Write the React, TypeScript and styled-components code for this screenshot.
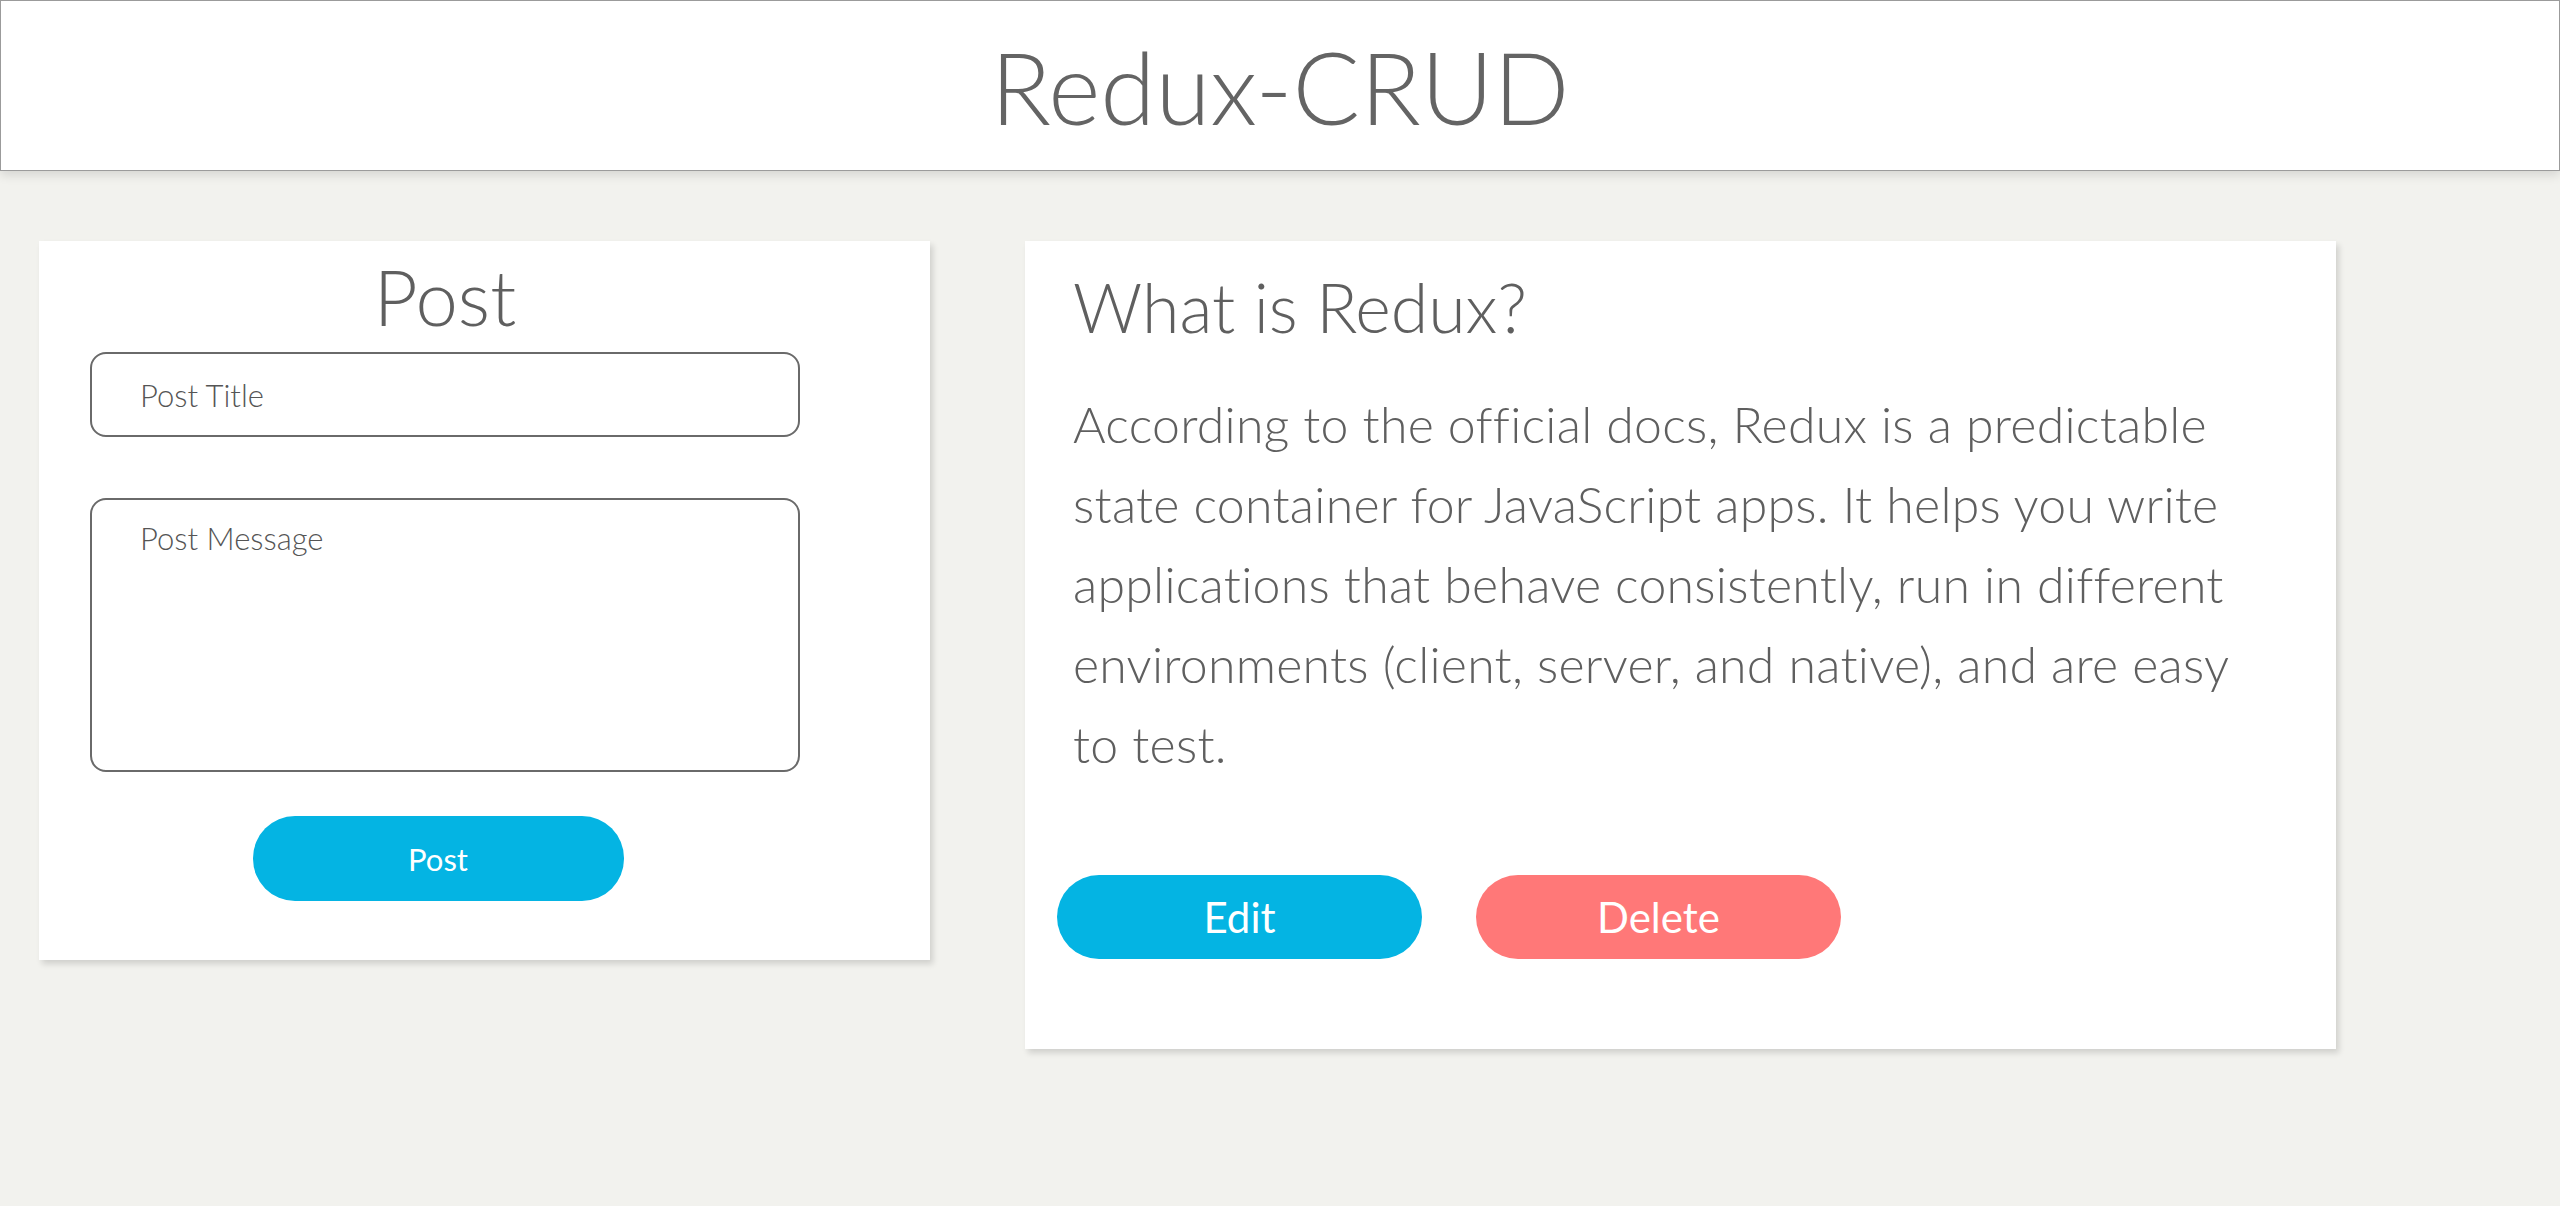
import React from "react";
import styled, { createGlobalStyle } from "styled-components";

const GlobalStyle = createGlobalStyle`
    body {
        margin: 0;
        background: #f2f2ee;
        font-family: "Lato", "Open Sans", sans-serif;
        font-weight: 300;
        color: #5f5f5f;
    }
`

const Header = styled.header`
    height: 169px;
    background: #ffffff;
    border: 1px solid #9b9b9b;
    box-shadow: 0 4px 10px rgba(0, 0, 0, 0.12);
    display: flex;
    align-items: center;
    justify-content: center;
`

const HeaderTitle = styled.h1`
    margin: 0;
    font-size: 100px;
    font-weight: 300;
    color: #646464;
`

const Main = styled.main`
    display: flex;
    align-items: flex-start;
    gap: 95px;
    padding: 70px 39px;
`

const Card = styled.section<{ $width: number; $height: number }>`
    width: ${p => p.$width}px;
    height: ${p => p.$height}px;
    box-sizing: border-box;
    background: #ffffff;
    box-shadow: 3px 4px 6px rgba(0, 0, 0, 0.14);
`

const PostForm = styled.form`
    width: 710px;
    padding: 10px 0 0 51px;
    display: flex;
    flex-direction: column;
    align-items: center;
`

const FormTitle = styled.h2`
    margin: 0 0 9px;
    font-size: 76px;
    font-weight: 300;
    line-height: 92px;
    color: #5f5f5f;
`

const Field = styled.input`
    width: 100%;
    height: 85px;
    box-sizing: border-box;
    border: 2px solid #6a6a6a;
    border-radius: 16px;
    padding: 0 48px;
    font-family: inherit;
    font-weight: 300;
    font-size: 31px;
    color: #5f5f5f;
    margin-bottom: 61px;

    &::placeholder {
        color: #555555;
    }
`

const MessageField = styled.textarea`
    width: 100%;
    height: 274px;
    box-sizing: border-box;
    border: 2px solid #6a6a6a;
    border-radius: 16px;
    padding: 19px 48px;
    font-family: inherit;
    font-weight: 300;
    font-size: 31px;
    color: #5f5f5f;
    resize: none;
    margin-bottom: 44px;

    &::placeholder {
        color: #555555;
    }
`

const Button = styled.button<{ $color: string; $size: number }>`
    width: 365px;
    height: 84px;
    border: none;
    border-radius: 42px;
    background: ${p => p.$color};
    color: #ffffff;
    font-family: inherit;
    font-weight: 400;
    font-size: ${p => p.$size}px;
    cursor: pointer;
`

const PostButton = styled(Button)`
    width: 371px;
    height: 85px;
    margin-right: 14px;
`

const Article = styled.div`
    padding: 20px 48px 0;
`

const ArticleTitle = styled.h2`
    margin: 0 0 31px;
    font-size: 68px;
    font-weight: 300;
    line-height: 92px;
    color: #5f5f5f;
`

const ArticleBody = styled.p`
    margin: 0;
    max-width: 1170px;
    font-size: 50px;
    line-height: 80px;
    letter-spacing: 0.25px;
    color: #5f5f5f;
`

const Actions = styled.div`
    display: flex;
    gap: 54px;
    padding: 91px 0 0 32px;
`

export default function App() {
    return (
        <>
            <GlobalStyle />
            <Header>
                <HeaderTitle>Redux-CRUD</HeaderTitle>
            </Header>
            <Main>
                <Card $width={891} $height={719}>
                    <PostForm onSubmit={e => e.preventDefault()}>
                        <FormTitle>Post</FormTitle>
                        <Field placeholder="Post Title" />
                        <MessageField placeholder="Post Message" />
                        <PostButton $color="#04b4e3" $size={31}>Post</PostButton>
                    </PostForm>
                </Card>
                <Card $width={1311} $height={808}>
                    <Article>
                        <ArticleTitle>What is Redux?</ArticleTitle>
                        <ArticleBody>
                            According to the official docs, Redux is a predictable state container for
                            JavaScript apps. It helps you write applications that behave consistently, run
                            in different environments (client, server, and native), and are easy to test.
                        </ArticleBody>
                    </Article>
                    <Actions>
                        <Button $color="#04b4e3" $size={42}>Edit</Button>
                        <Button $color="#ff7878" $size={42}>Delete</Button>
                    </Actions>
                </Card>
            </Main>
        </>
    )
}
